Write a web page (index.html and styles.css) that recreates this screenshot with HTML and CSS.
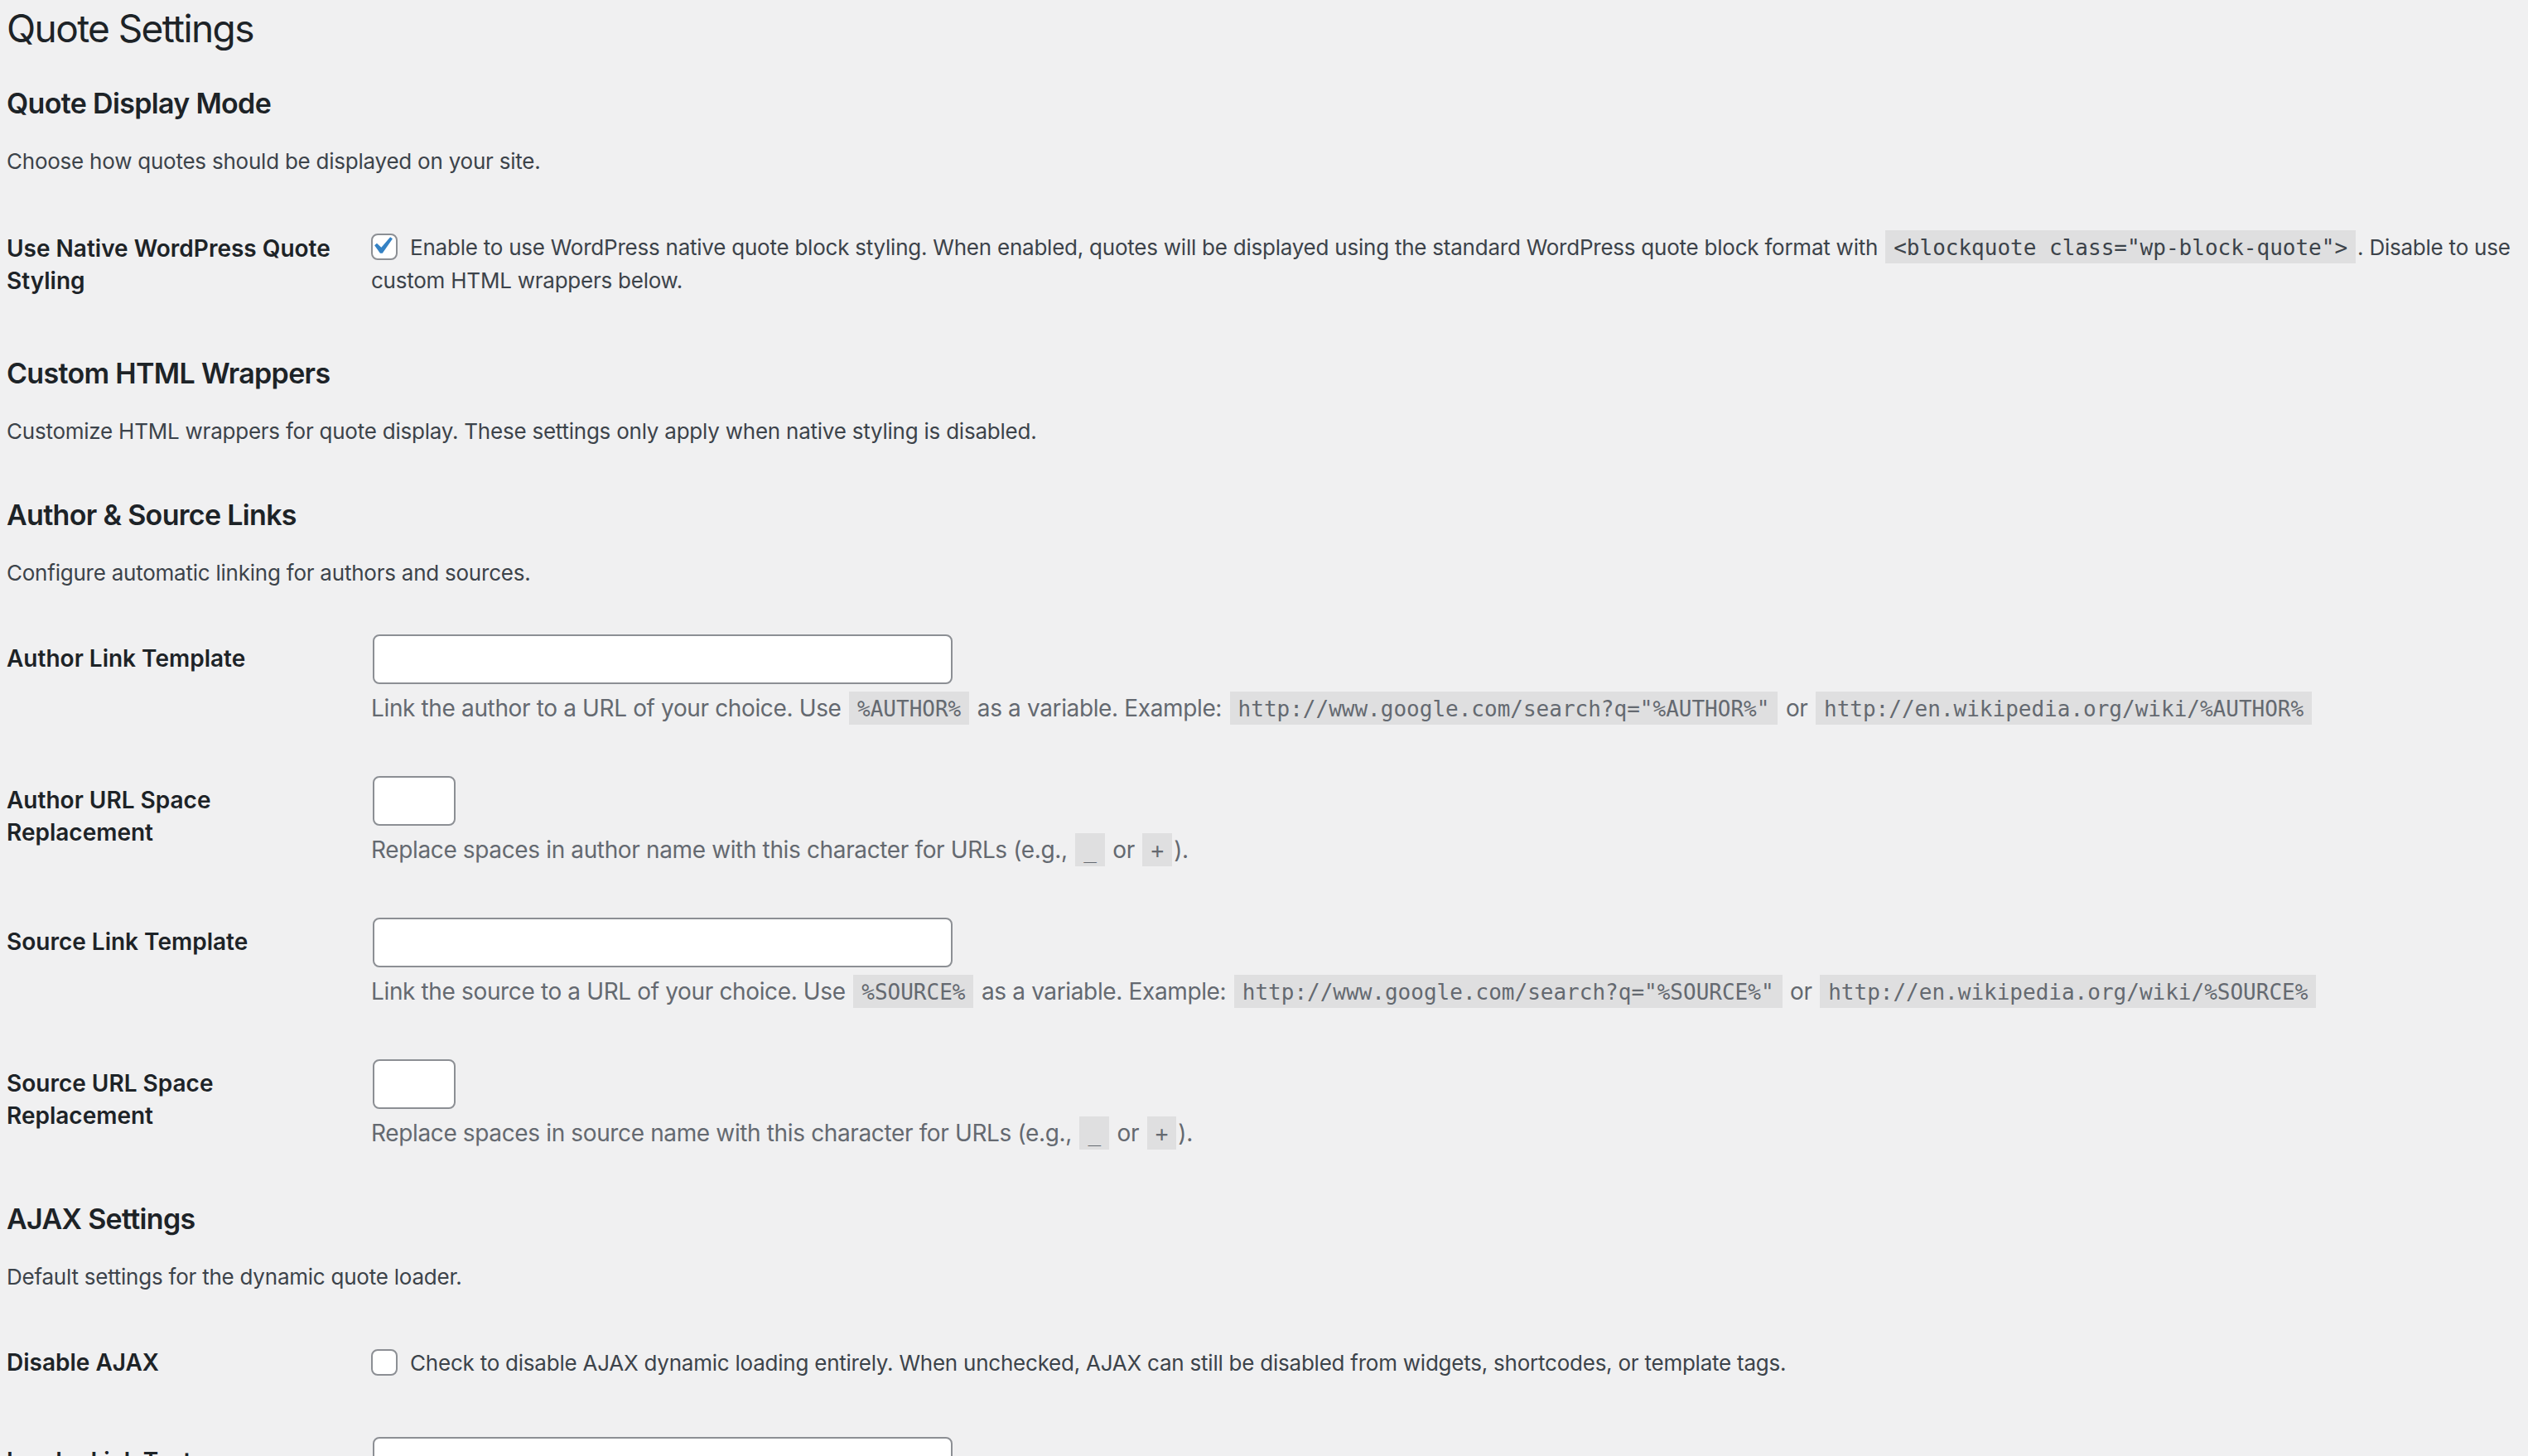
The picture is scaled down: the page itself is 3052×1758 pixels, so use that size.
FILE: index.html
```html
<!DOCTYPE html>
<html lang="en">
<head>
    <meta charset="UTF-8">
    <meta name="viewport" content="width=device-width, initial-scale=1.0">
    <title>Quote Settings</title>
    <link rel="stylesheet" href="styles.css">
</head>
<body>
    <div class="wrap">
        <h1>Quote Settings</h1>

        <h2>Quote Display Mode</h2>
        <p>Choose how quotes should be displayed on your site.</p>
        <table class="form-table first-table">
            <tr>
                <th>Use Native WordPress Quote Styling</th>
                <td>
                    <label class="check-label"><span class="check is-checked"><svg viewBox="0 0 20 20"><path d="M14.83 4.89l1.34.94-5.81 8.38H9.02L5.78 9.67l1.34-1.25 2.57 2.4z"/></svg></span> Enable to use WordPress native quote block styling. When enabled, quotes will be displayed using the standard WordPress quote block format with <code>&lt;blockquote class="wp-block-quote"&gt;</code>. Disable to use custom HTML wrappers below.</label>
                </td>
            </tr>
        </table>

        <h2>Custom HTML Wrappers</h2>
        <p>Customize HTML wrappers for quote display. These settings only apply when native styling is disabled.</p>
        <table class="form-table"></table>

        <h2>Author &amp; Source Links</h2>
        <p>Configure automatic linking for authors and sources.</p>
        <table class="form-table">
            <tr>
                <th>Author Link Template</th>
                <td>
                    <input type="text" class="regular-text">
                    <p class="description">Link the author to a URL of your choice. Use <code>%AUTHOR%</code> as a variable. Example: <code>http://www.google.com/search?q="%AUTHOR%"</code> or <code>http://en.wikipedia.org/wiki/%AUTHOR%</code></p>
                </td>
            </tr>
            <tr>
                <th>Author URL Space Replacement</th>
                <td>
                    <input type="text" class="small-text">
                    <p class="description">Replace spaces in author name with this character for URLs (e.g., <code>_</code> or <code>+</code>).</p>
                </td>
            </tr>
            <tr>
                <th>Source Link Template</th>
                <td>
                    <input type="text" class="regular-text">
                    <p class="description">Link the source to a URL of your choice. Use <code>%SOURCE%</code> as a variable. Example: <code>http://www.google.com/search?q="%SOURCE%"</code> or <code>http://en.wikipedia.org/wiki/%SOURCE%</code></p>
                </td>
            </tr>
            <tr>
                <th>Source URL Space Replacement</th>
                <td>
                    <input type="text" class="small-text">
                    <p class="description">Replace spaces in source name with this character for URLs (e.g., <code>_</code> or <code>+</code>).</p>
                </td>
            </tr>
        </table>

        <h2>AJAX Settings</h2>
        <p>Default settings for the dynamic quote loader.</p>
        <table class="form-table">
            <tr>
                <th>Disable AJAX</th>
                <td>
                    <label class="check-label"><span class="check"></span> Check to disable AJAX dynamic loading entirely. When unchecked, AJAX can still be disabled from widgets, shortcodes, or template tags.</label>
                </td>
            </tr>
            <tr>
                <th>Loader Link Text</th>
                <td>
                    <input type="text" class="regular-text">
                    <p class="description">The text shown on the link that loads a new quote.</p>
                </td>
            </tr>
        </table>
    </div>
</body>
</html>
```

FILE: styles.css
```css
body {
    margin: 0;
    background: #f0f0f1;
    color: #3c434a;
    font-family: Inter, "Noto Sans", sans-serif;
    font-size: 26px;
    line-height: 1.4;
    letter-spacing: -0.009em;
}

.wrap {
    padding: 5px 0 0 8px;
}

.wrap h1 {
    margin: 0;
    padding: 0 0 8px;
    font-size: 46px;
    font-weight: 400;
    line-height: 1.3;
    letter-spacing: -0.035em;
    color: #1d2327;
}

.wrap h2 {
    margin: 34px 0;
    font-size: 34px;
    font-weight: 600;
    line-height: 36px;
    letter-spacing: -0.02em;
    color: #1d2327;
}

.wrap p {
    margin: 26px 0;
    line-height: 36px;
}

.form-table {
    width: 100%;
    margin-top: 13px;
    border-collapse: collapse;
}

.form-table:empty {
    height: 5px;
}

.form-table th {
    width: 400px;
    padding: 40px 20px 40px 0;
    text-align: left;
    vertical-align: top;
    font-size: 28px;
    font-weight: 600;
    line-height: 39px;
    letter-spacing: 0;
    color: #1d2327;
}

.first-table th {
    padding-top: 42px;
}

.form-table td {
    padding: 30px 10px 30px 20px;
    vertical-align: middle;
    font-size: 26px;
    line-height: 39px;
}

.check-label {
    cursor: pointer;
}

.check {
    position: relative;
    display: inline-block;
    width: 32px;
    height: 32px;
    margin: -6px 8px 0 0;
    vertical-align: middle;
    box-sizing: border-box;
    border: 2px solid #8c8f94;
    border-radius: 8px;
    background: #fff;
}

.check svg {
    position: absolute;
    top: -8px;
    left: -10px;
    width: 42px;
    height: 42px;
    fill: #3582c4;
}

code {
    padding: 6px 10px 4px;
    margin: 0 2px;
    background: rgba(0, 0, 0, .07);
    font-family: "DejaVu Sans Mono", monospace;
    font-size: 26px;
    letter-spacing: 0;
}

input[type="text"] {
    display: block;
    box-sizing: border-box;
    height: 60px;
    margin: 0 2px;
    padding: 0 16px;
    border: 2px solid #8c8f94;
    border-radius: 8px;
    background: #fff;
    font: inherit;
}

.regular-text {
    width: 700px;
}

.small-text {
    width: 100px;
}

.form-table td p.description {
    margin: 8px 0 0;
    font-size: 28px;
    line-height: 42px;
    letter-spacing: -0.013em;
    color: #646970;
}
```
